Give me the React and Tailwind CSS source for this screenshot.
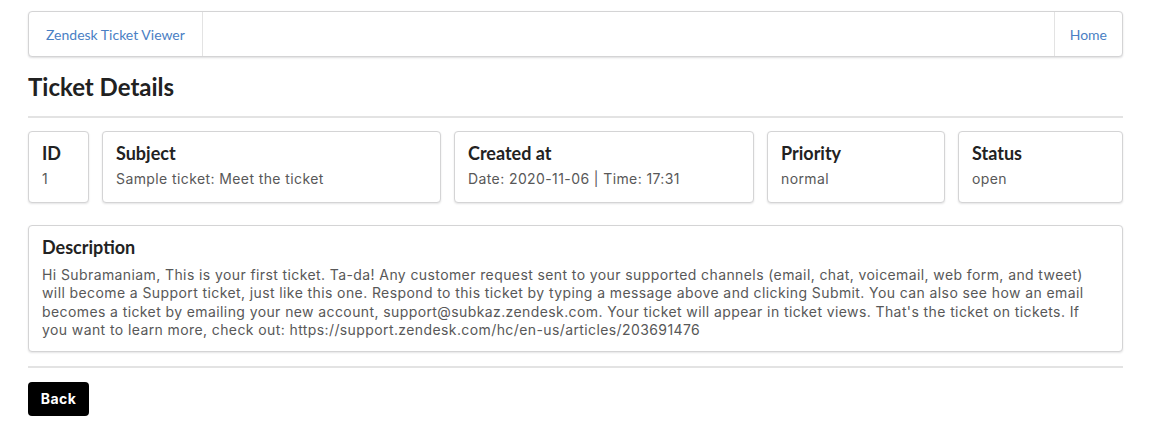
import React from "react";

const desc =
  "Hi Subramaniam, This is your first ticket. Ta-da! Any customer request sent to your supported channels (email, chat, voicemail, web form, and tweet) will become a Support ticket, just like this one. Respond to this ticket by typing a message above and clicking Submit. You can also see how an email becomes a ticket by emailing your new account, support@subkaz.zendesk.com. Your ticket will appear in ticket views. That's the ticket on tickets. If you want to learn more, check out: https://support.zendesk.com/hc/en-us/articles/203691476";

const fields = [
  { label: "ID", value: "1", w: "w-[61px]" },
  { label: "Subject", value: "Sample ticket: Meet the ticket", w: "w-[339px]" },
  { label: "Created at", value: "Date: 2020-11-06 | Time: 17:31", w: "w-[300px]" },
  { label: "Priority", value: "normal", w: "w-[178px]" },
  { label: "Status", value: "open", w: "w-[165px]" },
];

function Card({ label, children, className = "", gap = "mt-[6px]" }) {
  return (
    <div
      className={`rounded-[4px] border border-[#d4d4d5] bg-white px-[13px] pt-[10px] shadow-[0_1px_2px_rgba(34,36,38,0.12)] ${className}`}
    >
      <div className="font-['Lato','Liberation_Sans',sans-serif] text-[18px] font-bold leading-[22px] text-[#222]">
        {label}
      </div>
      <div className={`${gap} font-['Inter','Liberation_Sans',sans-serif] text-[14px] leading-[18.5px] tracking-[0.4px] text-[#585858]`}>
        {children}
      </div>
    </div>
  );
}

export default function App() {
  return (
    <div className="min-h-[428px] bg-white pt-[11px]">
      <div className="ml-[28px] w-[1095px] font-['Lato','Liberation_Sans',sans-serif]">
        {/* top menu */}
        <div className="flex h-[46px] items-stretch rounded-[4px] border border-[#d4d4d5] bg-white shadow-[0_1px_2px_rgba(34,36,38,0.15)]">
          <a className="flex items-center border-r border-[#e3e3e3] px-[17px] text-[14px] text-[#4a80c4]">
            Zendesk Ticket Viewer
          </a>
          <div className="flex-1" />
          <a className="flex items-center border-l border-[#e3e3e3] px-[15px] text-[14px] text-[#4a80c4]">
            Home
          </a>
        </div>

        <h1 className="mt-[15px] text-[24px] font-bold leading-[30px] text-[#212121]">Ticket Details</h1>
        <div className="mt-[14px] h-[2px] bg-[#e3e3e3]" />

        <div className="mt-[13px] flex gap-[13px]">
          {fields.map((f) => (
            <Card key={f.label} label={f.label} className={`${f.w} pb-[13px]`}>
              {f.value}
            </Card>
          ))}
        </div>

        <Card label="Description" className="mt-[22px] pb-[11px]" gap="mt-[8px]">
          {desc}
        </Card>

        <div className="mt-[14px] h-[2px] bg-[#e3e3e3]" />

        <button className="mt-[14px] h-[34px] w-[61px] rounded-[4px] bg-black font-['Inter','Liberation_Sans',sans-serif] text-[14px] font-bold tracking-[0.5px] text-white">
          Back
        </button>
      </div>
    </div>
  );
}
